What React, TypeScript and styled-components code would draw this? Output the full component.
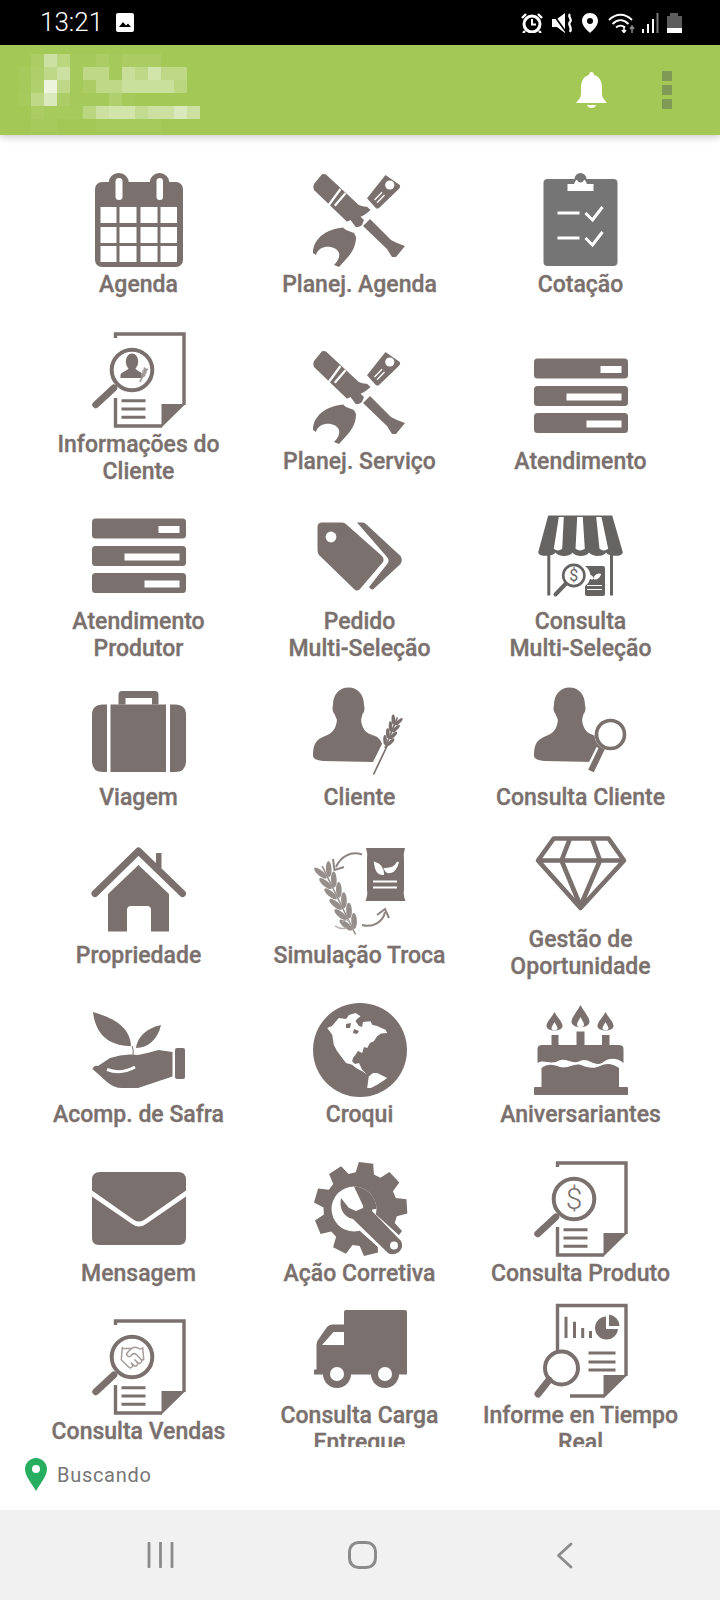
import type { ReactNode } from 'react'
import styled, { createGlobalStyle } from 'styled-components'
import { Handshake } from 'lucide-react'

const GlobalStyle = createGlobalStyle`
  html, body {
    margin: 0;
    padding: 0;
    background: #fff;
    font-family: Roboto, "Liberation Sans", sans-serif;
  }
`

const Screen = styled.div`
  width: 720px;
  height: 1600px;
  display: flex;
  flex-direction: column;
  overflow: hidden;
  background: #fff;
`

const StatusBar = styled.div`
  height: 45px;
  flex: none;
  display: flex;
  align-items: center;
  padding-left: 40px;
  background: #000;
  color: #fff;
`
const Clock = styled.span`
  font-size: 26px;
  line-height: 45px;
  font-weight: 300;
  margin-right: 13px;
`
const StatusIcons = styled.div`
  display: flex;
  align-items: center;
  margin-left: auto;
  padding-right: 38px;
`
const StatusSlot = styled.svg`
  display: block;
  height: 20px;
  flex: none;
`

const AppBar = styled.header`
  height: 90px;
  flex: none;
  display: flex;
  align-items: center;
  padding: 0 48px 0 18px;
  background: #a3c855;
  box-shadow: 0 2px 8px rgba(0, 0, 0, 0.22);
  position: relative;
  z-index: 1;
`
const Mosaic = styled.svg`
  display: block;
  margin-top: 6px;
`
const BarActions = styled.div`
  display: flex;
  align-items: center;
  gap: 55px;
  margin-left: auto;
`
const MenuDots = styled.div`
  display: flex;
  flex-direction: column;
  gap: 4px;
`
const MenuDot = styled.span`
  width: 10px;
  height: 10px;
  background: #7e9a55;
`

const Scroller = styled.main`
  flex: 1;
  min-height: 0;
  overflow: hidden;
  padding: 21px 29px 0 28px;
`
const MenuRow = styled.div<{ $loose?: boolean }>`
  display: grid;
  grid-template-columns: repeat(3, 1fr);
  align-items: center;
  height: 158.7px;
  margin-bottom: ${p => (p.$loose ? '18.3px' : '0')};
`
const MenuItem = styled.div`
  display: flex;
  flex-direction: column;
  align-items: center;
`
const Glyph = styled.svg<{ $tone?: string }>`
  display: block;
  width: 94px;
  height: 94px;
  flex: none;
  overflow: visible;
  color: ${p => p.$tone || '#7a706d'};
  fill: currentColor;
`
const Label = styled.div<{ $wrapped: boolean }>`
  margin-top: 4px;
  padding-bottom: ${p => (p.$wrapped ? '6px' : '0')};
  font-size: 23px;
  line-height: 27px;
  font-weight: 500;
  -webkit-text-stroke: 0.35px #7a706d;
  color: #7a706d;
  text-align: center;
  white-space: pre-line;
`

const LocationBar = styled.div`
  height: 63px;
  flex: none;
  box-sizing: border-box;
  display: flex;
  align-items: center;
  gap: 10px;
  padding: 0 0 8px 25px;
`
const LocationText = styled.span`
  font-size: 20px;
  letter-spacing: 0.7px;
  color: #767676;
`

const NavBar = styled.nav`
  height: 90px;
  flex: none;
  display: grid;
  grid-template-columns: repeat(3, 202px);
  justify-content: center;
  justify-items: center;
  align-items: center;
  padding-left: 4px;
  box-sizing: border-box;
  background: #f1f1f1;
  color: #8b8b8b;
`

const mosaicCells = [
  [0, 0.1, 0.45, 0.25, 0.03, 0.03, 0.1, 0.03, 0.08, 0.08, 0.08, 0, 0, 0],
  [0.05, 0.12, 0.3, 0.45, 0.03, 0.3, 0.3, 0.03, 0.4, 0.3, 0.5, 0.3, 0.3, 0],
  [0.03, 0.15, 0.8, 0.3, 0.03, 0.1, 0.3, 0.3, 0.42, 0.42, 0.42, 0.42, 0.25, 0],
  [0.05, 0.3, 0.6, 0.1, 0.03, 0.03, 0.03, 0.15, 0.03, 0, 0, 0, 0, 0],
  [0, 0.08, 0.04, 0.05, 0.05, 0.25, 0.45, 0.5, 0.5, 0.35, 0.45, 0.45, 0.6, 0.45],
  [0, 0.05, 0.05, 0, 0, 0, 0.05, 0.05, 0.05, 0.05, 0.05, 0, 0, 0],
]

const gearPath = (cx: number, cy: number, outer: number, root: number, teeth: number) => {
  const pts: string[] = []
  const step = (Math.PI * 2) / teeth
  for (let i = 0; i < teeth; i++) {
    const a = i * step - Math.PI / 2 + 0.12
    const at = (r: number, off: number) =>
      `${(cx + Math.cos(a + off * step) * r).toFixed(1)} ${(cy + Math.sin(a + off * step) * r).toFixed(1)}`
    pts.push(at(root, -0.36), at(outer, -0.22), at(outer, 0.22), at(root, 0.36))
  }
  return `M${pts.join('L')}Z`
}

function WheatEar({ x, y, angle, length, size, pairs, color }: { x: number; y: number; angle: number; length: number; size: number; pairs: number; color?: string }) {
  const grains = []
  for (let i = 0; i < pairs; i++) {
    const py = -length + (i * size * 1.05) + size * 0.5
    grains.push(
      <ellipse key={`l${i}`} cx={-size * 0.42} cy={py} rx={size * 0.26} ry={size * 0.72} transform={`rotate(-24 ${-size * 0.42} ${py})`} />,
      <ellipse key={`r${i}`} cx={size * 0.42} cy={py} rx={size * 0.26} ry={size * 0.72} transform={`rotate(24 ${size * 0.42} ${py})`} />,
    )
  }
  return (
    <g transform={`translate(${x} ${y}) rotate(${angle})`} fill={color || 'currentColor'}>
      <line x1="0" y1="0" x2="0" y2={-length} stroke={color || 'currentColor'} strokeWidth="1.6" />
      {grains}
    </g>
  )
}

function Calendar() {
  const xs: [number, number][] = [[8.5, 16], [27.5, 17], [48.5, 17], [68.5, 16.5]]
  const ys = [34, 54, 73]
  return (
    <Glyph viewBox="0 0 94 94">
      <rect x="3" y="9" width="88" height="85" rx="7" />
      <rect x="16.5" y="0" width="20.5" height="30" rx="10" />
      <rect x="57.5" y="0" width="20" height="30" rx="10" />
      <rect x="23.5" y="5" width="7" height="22" rx="3.5" fill="#fff" />
      <rect x="64.5" y="5" width="6.5" height="22" rx="3.2" fill="#fff" />
      {ys.map(y => xs.map(([x, w]) => <rect key={`${x}-${y}`} x={x} y={y} width={w} height="16" fill="#fff" />))}
    </Glyph>
  )
}

function Tools() {
  return (
    <Glyph viewBox="0 0 94 94">
      <path d="M9 1.3L1 11Q-.5 14 1 17L34 48.7L37.5 47L42.5 53.7Q46 55 49 52L51 47L47.5 43.7Q52 42 57.5 37L54 33.7Q50 34 45.8 32L13 1.5Q11 .5 9 1.3Z" />
      <path d="M15.8 32L27.5 16M21.8 32.7L32.5 20.3" stroke="#fff" strokeWidth="2.2" fill="none" />
      <path d="M57 46L50 53L74 76L79 84L83 84L92 73L84 70L78 67Z" />
      <path d="M72.5 2L86.8 12Q88 14 85.8 16L65.8 35.3Q64 36 62.5 34.7L54 25.3Z" />
      <circle cx="76.8" cy="12" r="4.6" fill="#fff" />
      <path d="M61.5 27L69 19.3M64 29.7L71.5 22" stroke="#fff" strokeWidth="1.3" fill="none" />
      <path d="M0 80C0 66 13 56 30 54.5L33 57L41 60L43 64C43 72 40 78 35 84L26 94L21 92C25 88 27 84 26 80C24 75 18 73 12 74C7 75 4 78 3 82Z" />
    </Glyph>
  )
}

function Clipboard() {
  return (
    <Glyph viewBox="0 0 94 94" $tone="#757575">
      <rect x="9.5" y="6" width="74" height="87" rx="4" />
      <path d="M40.5 6a6 6 0 0 1 12 0Z" />
      <path d="M33.5 18V11H40L42 7H51L53 11H59.5V18Z" fill="#fff" />
      <circle cx="46.5" cy="6" r="3.4" />
      <path d="M23.5 40H45.5M23.5 65H45.5M51.5 40L58.5 47L68.5 34M51.5 65L58.5 72L68.5 59" stroke="#fff" strokeWidth="3" fill="none" />
    </Glyph>
  )
}

function DocLens({ children }: { children: ReactNode }) {
  return (
    <Glyph viewBox="0 0 94 94">
      <path d="M23.5 5V1H92V72M23.5 65V93H70" stroke="currentColor" strokeWidth="3.4" fill="none" />
      <path d="M69.5 71H93.5L69.5 94.5Z" />
      <circle cx="40" cy="37" r="20.3" stroke="currentColor" strokeWidth="4" fill="#fff" />
      <path d="M21.8 55L3.8 71.7" stroke="currentColor" strokeWidth="7" strokeLinecap="round" />
      <path d="M29.5 67.7H53.5M29.5 76H53.5M29.5 84.3H53.5" stroke="currentColor" strokeWidth="3" />
      {children}
    </Glyph>
  )
}

function ClientDoc() {
  return (
    <DocLens>
      <ellipse cx="40" cy="28.5" rx="6.2" ry="8" />
      <path d="M28.5 45V42C29 38.5 36 38.5 37 34H43C44 38.5 50 38.5 51 42V45Z" />
      <g transform="translate(-2 2)"><WheatEar x={50} y={47} angle={24} length={15} size={3} pairs={3} color="#9d9693" /></g>
    </DocLens>
  )
}

function DollarDoc() {
  return (
    <DocLens>
      <text x="40" y="47" textAnchor="middle" fontFamily="Roboto, sans-serif" fontSize="30" fontWeight="300">$</text>
    </DocLens>
  )
}

function SalesDoc() {
  return (
    <DocLens>
      <Handshake x={27} y={24} width={27} height={27} color="#a49c99" strokeWidth={1.3} fill="none" />
    </DocLens>
  )
}

function Servers() {
  const rows: [number, number][] = [[8.5, 66.5], [36, 32.5], [63, 52.5]]
  return (
    <Glyph viewBox="0 0 94 94">
      {rows.map(([y, x]) => (
        <g key={y}>
          <rect x="0" y={y} width="94" height="20" rx="3.5" />
          <rect x={x} y={y + 7.5} width={87.5 - x} height="7" fill="#fff" />
        </g>
      ))}
    </Glyph>
  )
}

function Tags() {
  return (
    <Glyph viewBox="0 0 94 94">
      <path d="M9 12.5H29.5Q32 12.5 34 15L69 46Q71.5 49 70 52L47 79Q44 82 41 79L6 45Q4.5 43 4.5 40V17Q4.5 12.5 9 12.5Z" />
      <circle cx="18" cy="27" r="5.4" fill="#fff" />
      <path d="M44 12.5H50Q52 12.5 54 15L87.5 46Q90 50 87.5 54L60 79.5Q58 80 56 77L75 53Q76.5 50 74 47Z" />
    </Glyph>
  )
}

function Store() {
  return (
    <Glyph viewBox="0 0 94 94" $tone="#666463">
      <path d="M14.2 5.5H78.2L88.8 42.2C88.8 47 75 47 72 42.5C70 47 58 47 55 42.5C53 47 41 47 38.5 42.5C36 47 24 47 21.5 42.5C19 47 4.2 47 4.2 42.2Z" />
      <path d="M24.8 7H29.8L28.2 38.8Q24 42 19.8 38.8ZM43.2 7H48.8L50.8 38.8Q46 42 41.5 38.8ZM62.2 7H67.5L74.2 38.8Q70 42 65.5 38.8Z" fill="#fff" />
      <path d="M14.8 45V85.5M77.5 45V85.5" stroke="currentColor" strokeWidth="3" />
      <circle cx="39.8" cy="65.5" r="10.6" stroke="currentColor" strokeWidth="2.6" fill="#fff" />
      <path d="M31.5 74L21.5 84.5" stroke="currentColor" strokeWidth="4" strokeLinecap="round" />
      <text x="39.8" y="71" textAnchor="middle" fontFamily="Roboto, sans-serif" fontSize="16">$</text>
      <path d="M53 56H69Q71 56 71 58V84Q71 86 69 86H53Q51 86 51 84V76A12 12 0 0 0 51 56Z" />
      <path d="M60 69C60 65 63 64 66.5 64C66 67 64 69.5 60 69ZM59 69C59 66 57 65 54.5 65C55 68 56.5 69.5 59 69ZM53 75.5H68M53 79.5H68" fill="#fff" stroke="#fff" strokeWidth="1" />
    </Glyph>
  )
}

function Suitcase() {
  return (
    <Glyph viewBox="0 0 94 94">
      <path fillRule="evenodd" d="M30 5H63Q66.5 5 66.5 9V18.5H60V12H33.5V18.5H26.5V9Q26.5 5 30 5Z" />
      <path d="M15 18.5V86H11Q0 86 0 75V29Q0 18.5 11 18.5ZM18.5 18.5H74V86H18.5ZM78 18.5H83Q94 18.5 94 29V75Q94 86 83 86H78Z" />
    </Glyph>
  )
}

const personHead = 'M35.5 1.5C45 1.5 51 9 51 19C52 22 51.5 26 49.5 28L48 34H24L21.5 28C19.5 26 19 22 20 19C20 9 26 1.5 35.5 1.5Z'
const personBody = 'M0 70C0 60 2 55 8 52C16 48 23 47 24 33H48C49 46 56 48 62 50C65 51 68 54 69 58L60 76L10 75Q0 74 0 70Z'

function PersonWheat() {
  return (
    <Glyph viewBox="0 0 94 94">
      <path d={personHead} />
      <path d={personBody} />
      <path d="M60.5 88.5L75 58" stroke="#fff" strokeWidth="5" />
      <path d="M60.5 88.5L75 58" stroke="currentColor" strokeWidth="1.7" />
      <WheatEar x={72} y={62} angle={22} length={33} size={7} pairs={4} />
    </Glyph>
  )
}

function PersonLens() {
  return (
    <Glyph viewBox="0 0 94 94">
      <path d={personHead} />
      <path d={personBody} />
      <path d="M67.5 63.5L56.5 85.5" stroke="#fff" strokeWidth="11" />
      <circle cx="76.5" cy="48.5" r="16" fill="#fff" />
      <circle cx="76.5" cy="48.5" r="14" stroke="currentColor" strokeWidth="3.6" fill="#fff" />
      <path d="M68 62L57 85" stroke="currentColor" strokeWidth="6.2" />
    </Glyph>
  )
}

function House() {
  return (
    <Glyph viewBox="0 0 94 94">
      <path d="M3 49.5L46.5 7L90.5 49.5" stroke="currentColor" strokeWidth="7" strokeLinecap="round" strokeLinejoin="round" fill="none" />
      <rect x="64" y="9" width="5.5" height="15" />
      <path d="M16 87.5V50L46.5 21L77 50V87.5H59V66Q59 62 55 62H39Q35 62 35 66V87.5Z" />
    </Glyph>
  )
}

function Exchange() {
  return (
    <Glyph viewBox="0 0 94 94">
      <path d="M53 4H92Q90 10 91 16V46Q90 51 92.5 57H52.5Q55 51 54 46V16Q55 10 53 4Z" />
      <path d="M62 19C68 21 70 24 70 30C65 30 63 27 62 19ZM85 18C82 24 78 25 72 25C74 30 82 30 85 18ZM60 37.5H84M60 43.5H84" fill="#fff" stroke="#fff" strokeWidth="2" />
      <path d="M49 10.5C38 7 28 12 23 23M49 81C60 84 70 78 72 68" stroke="#8d8481" strokeWidth="2" fill="none" />
      <path d="M20 15L21.5 26L31 23M64 71L72 65L76 74" stroke="#8d8481" strokeWidth="2" fill="none" />
      <WheatEar x={42.5} y={90.5} angle={-26} length={76} size={11} pairs={6} color="#968e8b" />
      <path d="M29 78C34 74 37 76 37 82M22 82C26 85 30 85 34 84" stroke="#b5afad" strokeWidth="1.4" fill="none" />
    </Glyph>
  )
}

function Diamond() {
  return (
    <Glyph viewBox="0 0 94 94">
      <path d="M19.7 10.5H74.5L90 32.5L46.5 80L4 32.5ZM4 32.5H90M36 10.5L27.5 32.5L46.5 78L66 32.5L58 10.5" stroke="currentColor" strokeWidth="4.6" strokeLinejoin="round" fill="none" />
    </Glyph>
  )
}

function HandPlant() {
  return (
    <Glyph viewBox="0 0 94 94">
      <path d="M1 9C18 14 38 22 39 43C22 43 4 36 1 9Z" />
      <path d="M69 22C60 24 46 30 44 45C56 45 66 36 69 22Z" />
      <path d="M40 43Q42 47 41 52" stroke="currentColor" strokeWidth="1" fill="none" />
      <path d="M.5 66Q2 62 6 63L18 55Q32 50 46 52Q56 50 66.5 47L80.5 49V73.5L46 85H30Q22 85 15 79Z" />
      <path d="M15 66.5C24 70 34 69 43 64" stroke="#fff" strokeWidth="3" fill="none" />
      <rect x="83" y="45" width="10" height="31" rx="2" />
    </Glyph>
  )
}

function Globe() {
  return (
    <Glyph viewBox="0 0 94 94">
      <circle cx="47" cy="47" r="47" />
      <path fill="#fff" d="M14.2 25L19 23L25.8 15L33 16L36 12L42.5 10L47.5 13.3L44 16L42.5 18.3L46 23L49 24L50 19L57.5 18.3L59.2 21.7L64 23L72.5 26.7L74.2 30L68 30.5L64.2 33.3L60.8 38.3L57 40L54.2 45L51 44L49.2 50L45 48L42.5 51.7L40 55L39.2 58.3L42 61L46 60L49.2 66.7L54.2 71.7L49.2 68.3L43 65L39.2 61.7L33 60L29.2 55L24 48L20.8 41.7L19.2 31.7Z" />
      <path fill="#7a706d" d="M33 21L38 20L37 25L33 25ZM41 26L46 28L44 31L40 30Z" />
      <path fill="#fff" d="M55.8 73.3L60 70L64.2 70L74.2 75L70 78L64.2 81.7L58 85L54.2 85L55 79Z" />
    </Glyph>
  )
}

function Cake() {
  const flame = (x: number, top: number, h: number, w: number) =>
    `M${x} ${top}C${x + w * 0.2} ${top + h * 0.3} ${x + w / 2} ${top + h * 0.5} ${x + w / 2} ${top + h * 0.7}C${x + w / 2} ${top + h} ${x - w / 2} ${top + h} ${x - w / 2} ${top + h * 0.7}C${x - w / 2} ${top + h * 0.5} ${x - w * 0.2} ${top + h * 0.3} ${x} ${top}Z`
  return (
    <Glyph viewBox="0 0 94 94">
      <path d={flame(20.5, 9, 20, 16)} />
      <path d={flame(46.5, 2, 24, 18)} />
      <path d={flame(71.5, 9, 20, 16)} />
      <path d={flame(20.5, 19, 9, 6)} fill="#fff" />
      <path d={flame(46.5, 14, 11, 7)} fill="#fff" />
      <path d={flame(71.5, 19, 9, 6)} fill="#fff" />
      <rect x="17.5" y="32" width="7" height="11" />
      <rect x="42.5" y="28.5" width="8" height="15" />
      <rect x="68" y="32" width="7.5" height="11" />
      <path d="M3.5 46Q3.5 42 8 42H85Q89.5 42 89.5 46V60C82 54 74 55 68 60C60 64 54 54 46 58C38 62 32 54 24 58C16 62 10 56 3.5 60Z" />
      <path d="M7.5 65C14 60 20 62 26 64C34 66 40 60 47 62C54 65 60 66 66 63C72 60 78 60 85 65V84H7.5Z" />
      <rect x="0" y="84" width="94" height="8" rx="1" />
    </Glyph>
  )
}

function Envelope() {
  return (
    <Glyph viewBox="0 0 94 94">
      <path d="M8 10H86Q94 10 94 18V28.5L52 58Q47 61 42 58L0 28.5V18Q0 10 8 10Z" />
      <path d="M0 34.5L40 62Q47 67 54 62L94 34.5V76Q94 83 87 83H7Q0 83 0 76Z" />
    </Glyph>
  )
}

function GearWrench() {
  return (
    <Glyph viewBox="0 0 94 94">
      <path d={gearPath(47.5, 47, 47, 37, 9)} />
      <circle cx="41" cy="47" r="22.5" fill="#fff" />
      <path d="M43 50L82 85" stroke="#fff" strokeWidth="23" strokeLinecap="round" />
      <path d="M41 24.5A22.5 22.5 0 0 1 63.5 47L52 48Z" />
      <path d="M28 36C26 46 30 55 40 57L75 91Q80 94 86 90Q91 85 88 79L59 49C61 42 59 34 52 30L44 28L52 38L50 46L43 49L36 46Z" />
      <circle cx="81" cy="83.5" r="4" fill="#fff" />
    </Glyph>
  )
}

function Truck() {
  return (
    <Glyph viewBox="0 0 94 94">
      <path d="M33 6H92Q94 6 94 8V70.5H31V8Q31 6 33 6Z" />
      <path d="M31 20.5H19Q16 20.5 14 23L5 36Q3.5 38 3.5 41V65.5H1V70.5H31Z" />
      <path d="M9 41L20.5 28H31V41Z" fill="#fff" />
      <circle cx="24" cy="70" r="14" />
      <circle cx="72" cy="70" r="14" />
      <circle cx="24" cy="70" r="7" fill="#fff" />
      <circle cx="72" cy="70" r="7" fill="#fff" />
    </Glyph>
  )
}

function Report() {
  return (
    <Glyph viewBox="0 0 94 94">
      <path d="M23.5 55V1.5H92V72M36 92H70" stroke="currentColor" strokeWidth="3.4" fill="none" />
      <path d="M69.5 71H93.5L69.5 94.5Z" />
      <path d="M32 34V12.7M40.5 34V17.7M48.7 34V24M56.5 34V27" stroke="currentColor" strokeWidth="3" />
      <path d="M72 12.5A11.5 11.5 0 1 0 84 25H72Z" />
      <path d="M75 10.5A12 12 0 0 1 85.5 22H75Z" />
      <path d="M54.5 49H81.5M54.5 58H81.5M54.5 66H81.5" stroke="currentColor" strokeWidth="3" />
      <circle cx="27.5" cy="64" r="16.5" stroke="currentColor" strokeWidth="4" fill="#fff" />
      <path d="M15 76L4 90" stroke="currentColor" strokeWidth="7" strokeLinecap="round" />
    </Glyph>
  )
}

const menu: { label: string; icon: ReactNode }[][] = [
  [
    { label: 'Agenda', icon: <Calendar /> },
    { label: 'Planej. Agenda', icon: <Tools /> },
    { label: 'Cotação', icon: <Clipboard /> },
  ],
  [
    { label: 'Informações do\nCliente', icon: <ClientDoc /> },
    { label: 'Planej. Serviço', icon: <Tools /> },
    { label: 'Atendimento', icon: <Servers /> },
  ],
  [
    { label: 'Atendimento\nProdutor', icon: <Servers /> },
    { label: 'Pedido\nMulti-Seleção', icon: <Tags /> },
    { label: 'Consulta\nMulti-Seleção', icon: <Store /> },
  ],
  [
    { label: 'Viagem', icon: <Suitcase /> },
    { label: 'Cliente', icon: <PersonWheat /> },
    { label: 'Consulta Cliente', icon: <PersonLens /> },
  ],
  [
    { label: 'Propriedade', icon: <House /> },
    { label: 'Simulação Troca', icon: <Exchange /> },
    { label: 'Gestão de\nOportunidade', icon: <Diamond /> },
  ],
  [
    { label: 'Acomp. de Safra', icon: <HandPlant /> },
    { label: 'Croqui', icon: <Globe /> },
    { label: 'Aniversariantes', icon: <Cake /> },
  ],
  [
    { label: 'Mensagem', icon: <Envelope /> },
    { label: 'Ação Corretiva', icon: <GearWrench /> },
    { label: 'Consulta Produto', icon: <DollarDoc /> },
  ],
  [
    { label: 'Consulta Vendas', icon: <SalesDoc /> },
    { label: 'Consulta Carga\nEntregue', icon: <Truck /> },
    { label: 'Informe en Tiempo\nReal', icon: <Report /> },
  ],
]

export default function App() {
  return (
    <Screen>
      <GlobalStyle />
      <StatusBar>
        <Clock>13:21</Clock>
        <svg width="18" height="19" viewBox="0 0 18 19">
          <rect width="18" height="19" rx="2" fill="#fff" />
          <path d="M3 14L7 9L10 12.5L12 10.5L15 14Z" fill="#000" />
        </svg>
        <StatusIcons>
          <StatusSlot width="31" viewBox="0 0 31 20">
            <circle cx="11" cy="11" r="8" fill="none" stroke="#fff" strokeWidth="3" />
            <path d="M11 6V11.5H15" fill="none" stroke="#fff" strokeWidth="2" />
            <path d="M1 5L5 1M17 1L21 5M4 18L2 20M18 18L20 20" stroke="#fff" strokeWidth="2.4" />
          </StatusSlot>
          <StatusSlot width="30" viewBox="0 0 30 20">
            <path d="M0 6H5L13 0V20L5 14H0Z" fill="#fff" />
            <path d="M1 1L14 19" stroke="#000" strokeWidth="1.6" />
            <path d="M18 1C15 4 21 6 18 9C15 12 21 14 18 19" fill="none" stroke="#fff" strokeWidth="2.2" />
          </StatusSlot>
          <StatusSlot width="26" viewBox="0 0 26 20">
            <path fillRule="evenodd" d="M8 0C12.5 0 16 3.5 16 8C16 13 10 18 8 20C6 18 0 13 0 8C0 3.5 3.5 0 8 0ZM8 5A3 3 0 1 0 8 11A3 3 0 0 0 8 5Z" fill="#fff" />
          </StatusSlot>
          <StatusSlot width="33" viewBox="0 0 33 20">
            <path d="M1 7C8 0 17 0 24 7M4.5 11C9.5 6 15.5 6 20.5 11M8 14.5C11 12 14 12 17 14.5" fill="none" stroke="#fff" strokeWidth="1.8" />
            <path d="M16 13V19M14 17L16 19.5L18 17" fill="none" stroke="#fff" strokeWidth="1.5" />
            <path d="M24 20V14M22 16L24 13L26 16" fill="none" stroke="#8c8c8c" strokeWidth="1.5" />
          </StatusSlot>
          <StatusSlot width="26" viewBox="0 0 26 20">
            <path d="M1 20V16H3V20ZM6 20V11H8V20ZM11 20V6H13V20Z" fill="#fff" />
            <path d="M15.5 20V0H17.5V20Z" fill="#777" />
          </StatusSlot>
          <StatusSlot width="15" viewBox="0 0 15 20">
            <rect x="3" y="0" width="8" height="3" fill="#5c5c5c" />
            <rect x="0" y="3" width="15" height="12" fill="#5c5c5c" />
            <rect x="0" y="15" width="15" height="5" fill="#fff" />
          </StatusSlot>
        </StatusIcons>
      </StatusBar>

      <AppBar>
        <Mosaic width="195" height="78" viewBox="0 0 195 78">
          {mosaicCells.map((row, r) =>
            row.map((o, c) => (o ? <rect key={`${r}-${c}`} x={c * 13} y={r * 13} width="13" height="13" fill="#fff" fillOpacity={o} /> : null)),
          )}
        </Mosaic>
        <BarActions>
          <svg width="31" height="36" viewBox="0 0 31 36" fill="#fff">
            <path d="M15.5 0C17 0 18 1 18 3C24 4.5 26 10 26 16V22C26 26 29 28 31 31H0C2 28 5 26 5 22V16C5 10 7 4.5 13 3C13 1 14 0 15.5 0Z" />
            <path d="M11 33H20C19 37 12 37 11 33Z" />
          </svg>
          <MenuDots>
            <MenuDot />
            <MenuDot />
            <MenuDot />
          </MenuDots>
        </BarActions>
      </AppBar>

      <Scroller>
        {menu.map((row, i) => (
          <MenuRow key={i} $loose={i < 2}>
            {row.map(item => (
              <MenuItem key={item.label}>
                {item.icon}
                <Label $wrapped={item.label.includes('\n')}>{item.label}</Label>
              </MenuItem>
            ))}
          </MenuRow>
        ))}
      </Scroller>

      <LocationBar>
        <svg width="22" height="33" viewBox="0 0 22 33">
          <path fillRule="evenodd" fill="#27ae60" d="M11 0C17 0 22 5 22 11C22 18 15 26 11 33C7 26 0 18 0 11C0 5 5 0 11 0ZM11 7A4 4 0 1 0 11 15A4 4 0 0 0 11 7Z" />
        </svg>
        <LocationText>Buscando</LocationText>
      </LocationBar>

      <NavBar>
        <svg width="27" height="26" viewBox="0 0 27 26">
          <path d="M2 1V25M13.5 1V25M25 1V25" stroke="currentColor" strokeWidth="2.8" strokeLinecap="round" />
        </svg>
        <svg width="29" height="28" viewBox="0 0 29 28">
          <rect x="1.5" y="1.5" width="26" height="25" rx="9" fill="none" stroke="currentColor" strokeWidth="3" />
        </svg>
        <svg width="17" height="27" viewBox="0 0 17 27">
          <path d="M15 2L2.5 13.5L15 25" fill="none" stroke="currentColor" strokeWidth="2.8" strokeLinecap="round" strokeLinejoin="round" />
        </svg>
      </NavBar>
    </Screen>
  )
}
